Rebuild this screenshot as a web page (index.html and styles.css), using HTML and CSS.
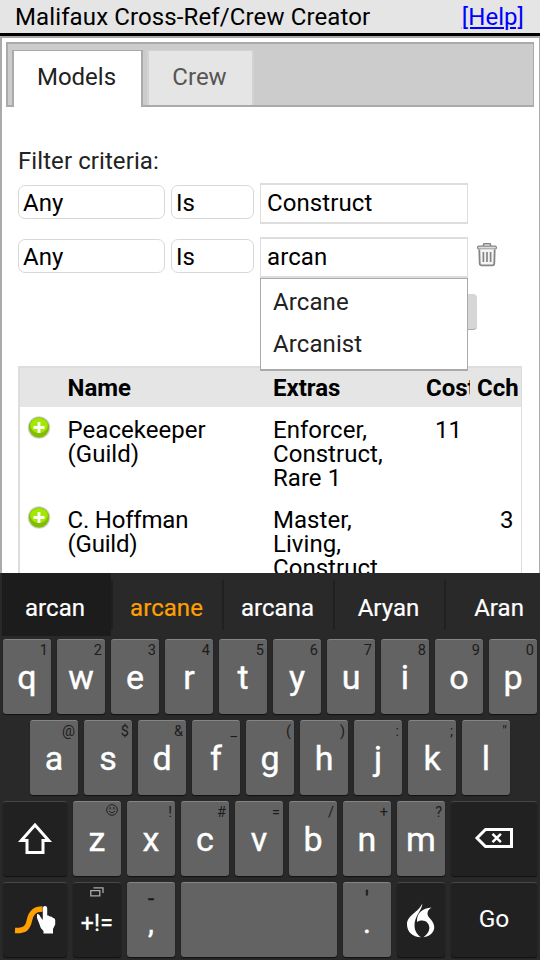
FILE: index.html
```
<!DOCTYPE html>
<html lang="en">
<head>
<meta charset="utf-8">
<title>Malifaux Cross-Ref/Crew Creator</title>
<link rel="stylesheet" href="styles.css">
</head>
<body>
<div class="screen">
  <header class="topbar"><span>Malifaux Cross-Ref/Crew Creator</span><a href="#">[Help]</a></header>
  <main class="panel">
    <nav class="tabs"><div class="tab active">Models</div><div class="tab">Crew</div></nav>
    <section class="content">
      <div class="label">Filter criteria:</div>
      <div class="filter">
        <div class="select field">Any</div><div class="select op">Is</div><div class="input">Construct</div>
      </div>
      <div class="filter">
        <div class="select field">Any</div><div class="select op">Is</div>
        <div class="input">arcan<div class="menu"><div>Arcane</div><div>Arcanist</div></div></div>
        <svg class="trash" width="20" height="24" viewBox="0 0 20 24" fill="none" stroke="#858585"><path d="M6.500 3V1.700Q6.500.7 7.500.7h5q1 0 1 1V3" stroke-width="1.500"/><rect x=".6" y="3.100" width="18.800" height="2.900" rx="1.300" fill="#ddd" stroke-width="1.200"/><path d="M2.300 6.500 2.700 20.500Q2.900 22.400 4.500 22.400h11q1.600 0 1.800-1.900L17.700 6.500" fill="#f4f4f4" stroke-width="1.800"/><path d="M6.400 9v10M10 9v10M13.600 9v10" stroke-width="1.700"/></svg>
      </div>
      <div class="actions"><div class="button"></div></div>
      <div class="table">
        <div class="row head"><span></span><span>Name</span><span>Extras</span><span class="cost">Cost</span><span class="cch">Cch</span></div>
        <div class="row">
          <svg class="add" width="24" height="23" viewBox="0 0 24 23"><circle cx="12" cy="11.500" r="11.300" fill="#d5d2df"/><circle cx="12" cy="11.500" r="10.200" fill="#82bd00"/><ellipse cx="12" cy="9.500" rx="8.800" ry="7.500" fill="#a2e800"/><path d="M12 6v11M6.500 11.500h11" stroke="#fff" stroke-width="2.800"/></svg>
          <span>Peacekeeper<br>(Guild)</span><span>Enforcer,<br>Construct,<br>Rare 1</span><span class="num">11</span><span></span>
        </div>
        <div class="row">
          <svg class="add" width="24" height="23" viewBox="0 0 24 23"><circle cx="12" cy="11.500" r="11.300" fill="#d5d2df"/><circle cx="12" cy="11.500" r="10.200" fill="#82bd00"/><ellipse cx="12" cy="9.500" rx="8.800" ry="7.500" fill="#a2e800"/><path d="M12 6v11M6.500 11.500h11" stroke="#fff" stroke-width="2.800"/></svg>
          <span class="tight">C. Hoffman<br>(Guild)</span><span>Master,<br>Living,<br>Construct</span><span></span><span class="num last">3</span>
        </div>
      </div>
    </section>
  </main>
  <div class="keyboard">
    <div class="suggest"><div class="typed">arcan</div><div class="best">arcane</div><div>arcana</div><div>Aryan</div><div class="cut">Aran</div></div>
    <div class="keys">
      <div class="key"><i>1</i><b>q</b></div><div class="key"><i>2</i><b>w</b></div><div class="key"><i>3</i><b>e</b></div><div class="key"><i>4</i><b>r</b></div><div class="key"><i>5</i><b>t</b></div><div class="key"><i>6</i><b>y</b></div><div class="key"><i>7</i><b>u</b></div><div class="key"><i>8</i><b>i</b></div><div class="key"><i>9</i><b>o</b></div><div class="key"><i>0</i><b>p</b></div>
    </div>
    <div class="keys inset">
      <div class="key"><i>@</i><b>a</b></div><div class="key"><i>$</i><b>s</b></div><div class="key"><i>&amp;</i><b>d</b></div><div class="key"><i>_</i><b>f</b></div><div class="key"><i>(</i><b>g</b></div><div class="key"><i>)</i><b>h</b></div><div class="key"><i>:</i><b>j</b></div><div class="key"><i>;</i><b>k</b></div><div class="key"><i>"</i><b>l</b></div>
    </div>
    <div class="keys">
      <div class="key dark shift"><svg width="36" height="34" viewBox="0 0 36 34" fill="none" stroke="#fff" stroke-width="3"><path d="M18 3 4.300 18.500H10V30.500H26V18.500h5.700Z"/></svg></div>
      <div class="key"><svg class="smile" width="12" height="12" viewBox="0 0 12 12" fill="none" stroke="#222"><circle cx="6" cy="6" r="5.300"/><path d="M3 7q3 3.500 6 0"/><path d="M4.200 3.200v2M7.800 3.200v2" stroke-width="1.300"/></svg><b>z</b></div><div class="key"><i>!</i><b>x</b></div><div class="key"><i>#</i><b>c</b></div><div class="key"><i>=</i><b>v</b></div><div class="key"><i>/</i><b>b</b></div><div class="key"><i>+</i><b>n</b></div><div class="key"><i>?</i><b>m</b></div>
      <div class="key dark wide"><svg class="back" width="40" height="22" viewBox="0 0 40 22" fill="none" stroke="#fff"><path d="M11.500 2.500H37.500V19.500H11.500L3 11Z" stroke-width="3"/><path d="m18.500 6.800 8.400 8.400m0-8.400-8.400 8.400" stroke-width="2.500"/></svg></div>
    </div>
    <div class="keys">
      <div class="key dark shift"><svg class="swype" width="42" height="30" viewBox="0 0 42 30"><path d="M1 25.500C12 26 14 22 15.500 15S20 4 28.500 4" fill="none" stroke="#ffa000" stroke-width="5.500"/><path d="M28.800 3Q29 1 31 1t2.200 2v7.200q2 .2 2.700 1.200 2.300 0 2.900 1.300 2.400.3 2.400 2.300v4.500L39 24v4.500H29.500V26Q26 23 25 18l-2-5V9q2.500 0 3.500 3l2.300 3Z" fill="#fff"/></svg></div>
      <div class="key dark sym"><svg width="14" height="10" viewBox="0 0 14 10" fill="none" stroke="#aaa" stroke-width="1.300"><path d="M.8 3.600h9v5.300h-9ZM3.500.8H13V6"/></svg><b>+!=</b></div>
      <div class="key punct"><u>-</u><b>,</b></div><div class="key space"></div><div class="key punct"><u>'</u><b>.</b></div>
      <div class="key dark"><svg class="flame" width="30" height="36" viewBox="0 0 30 36" fill="#fff"><path d="M16.300.500C16.500 6.500 8.500 13 8.500 22c0 6 2.500 9.500 6.500 12.300C6.500 34.300 1 28.500 1 21.500 1 12 12.500 9.500 16.300.500Z"/><path d="M25.500 4.500C21 7.500 20 11.500 24 15.500 32 23.500 28 33 17.500 34.300 21.500 31 23.500 28 23.300 24.500 23 18.500 17 15.500 11 19 10.500 10.500 16 5 25.500 4.500Z"/></svg></div>
      <div class="key dark wide go">Go</div>
    </div>
  </div>
</div>
</body>
</html>
```
FILE: styles.css
```
* { box-sizing: border-box; }
body { margin: 0; background: #fff; font-family: Roboto, sans-serif; font-size: 24px; color: #000; }
.screen { width: 540px; height: 960px; overflow: hidden; display: flex; flex-direction: column; }
.topbar { height: 36px; flex: none; display: flex; justify-content: space-between; padding: 1px 16px 0 15px; line-height: 32px; background: #e5e5e5; border-bottom: 3px solid #000; letter-spacing: .12px; }
.topbar a { color: #00f; text-decoration-thickness: 2px; text-underline-offset: 2px; letter-spacing: .05px; }
.panel { height: 537px; flex: none; overflow: hidden; border: 2px solid #aaa; border-right-width: 1px; border-bottom: 0; padding: 4px 5px 0 4px; }
.tabs { height: 65px; display: flex; gap: 4px; padding: 6px 4px 0; background: #ccc; border: 2px solid #aaa; border-right-width: 1px; }
.tab { height: 55px; width: 107px; background: #e5e5e5; border: 2px solid #d2d2d2; border-top-width: 1px; border-bottom: 0; text-align: center; line-height: 52px; color: #555; padding-right: 2px; }
.tab.active { width: 131px; height: 57px; background: #fff; border-color: #aaa; color: #222; }
.content { padding: 39px 12px 0; }
.label { height: 37px; line-height: 30px; color: #222; letter-spacing: .08px; }
.filter { height: 41px; margin-bottom: 13px; display: flex; align-items: flex-start; }
.select { height: 34px; margin-top: 2px; border: 1px solid #d8d8d8; border-radius: 7px; padding-left: 4px; line-height: 35px; }
.field { width: 147px; margin-right: 6px; }
.op { width: 83px; margin-right: 6px; }
.input { position: relative; width: 208px; height: 41px; border: 2px solid #ddd; border-right-width: 1px; border-left-width: 1px; padding-left: 6px; line-height: 36px; letter-spacing: .1px; }
.menu { position: absolute; z-index: 2; left: -1px; top: 39px; width: 208px; height: 93px; border: 1px solid #aaa; border-bottom-width: 2px; background: #fff; padding: 2px 12px; color: #222; line-height: 42px; letter-spacing: .1px; }
.trash { margin: 6px 0 0 9px; }
.actions { height: 75px; padding-top: 3px; display: flex; }
.button { width: 217px; height: 36px; margin-left: 242px; background: #d6d6d6; border-bottom: 1px solid #aaa; border-radius: 4px; }
.table { width: 504px; border: 2px solid #ddd; border-right-width: 1px; }
.row { display: grid; grid-template-columns: 47.500px 205.500px 153px 51px 1fr; line-height: 24px; height: 90px; padding-top: 11px; letter-spacing: .04px; }
.row.head { height: 39px; padding: 8px 0 0; background: #e5e5e5; font-weight: 700; letter-spacing: 0; }
.row > svg { margin: -2px 0 0 7px; }
.tight { letter-spacing: -.2px; }
.cost { width: 44px; overflow: hidden; }
.num { padding-left: 9px; }
.num.last { padding-left: 23px; }
.keyboard { flex: 1; background: #292929; color: #fff; }
.suggest { height: 66px; display: flex; padding-left: 2px; }
.suggest div { width: 111px; height: 50px; margin-top: 7px; padding: 2px 2px 0 0; flex: none; text-align: center; line-height: 52px; border-left: 2px solid #202020; letter-spacing: .05px; -webkit-text-stroke: .2px currentColor; }
.suggest .typed { width: 109px; height: 63px; margin-top: 0; padding: 9px 3px 0 0; border: 0; background: #1c1c1c; }
.suggest .best { color: #ffa000; }
.suggest .cut { width: 95px; text-align: right; padding-right: 15px; }
.keys { display: flex; gap: 6px; padding-left: 3px; margin-bottom: 6px; }
.keys.inset { padding-left: 30px; }
.key { position: relative; flex: none; width: 48px; height: 75px; border-radius: 3px; background: #636363; border-top: 1px solid #858585; box-shadow: 0 1px 1px #111; text-align: center; }
.key b { display: block; font-weight: 400; font-size: 34px; line-height: 40px; padding-top: 17px; -webkit-text-stroke: .4px #fff; }
.key i { position: absolute; right: 3px; top: 1px; font-style: normal; font-size: 14.500px; line-height: 19px; color: #1c1c1c; }
.smile { position: absolute; right: 3px; top: 2px; }
.dark { background: #212121; border-top-color: #484848; display: flex; align-items: center; justify-content: center; }
.shift { width: 64px; }
.wide { width: 86px; }
.back { margin-top: -2px; }
.space { width: 156px; }
.sym { flex-direction: column; justify-content: flex-start; padding-top: 4px; }
.sym b { font-size: 23px; padding-top: 7px; line-height: 40px; letter-spacing: .3px; -webkit-text-stroke: .3px #fff; }
.punct u { position: absolute; left: 0; right: 0; top: 5px; line-height: 22px; text-decoration: none; color: #181818; font-size: 22px; -webkit-text-stroke: .4px #181818; }
.punct b { padding-top: 20px; font-size: 30px; }
.flame { margin-top: 1px; }
.go { font-size: 24.500px; padding-bottom: 3px; }
```
